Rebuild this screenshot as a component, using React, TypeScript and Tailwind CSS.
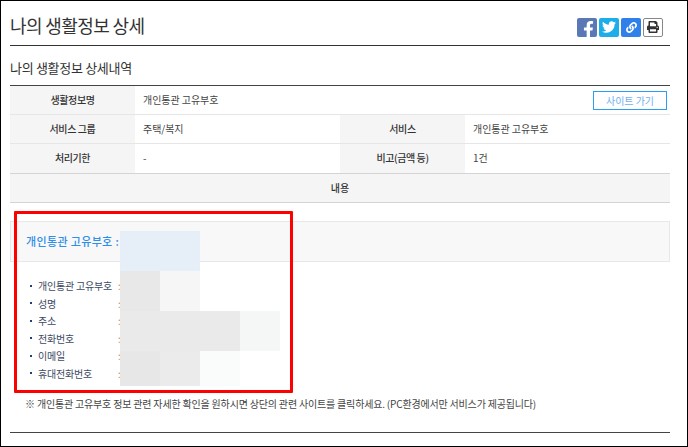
import React from "react";
import { FaFacebookF, FaTwitter, FaLink, FaPrint } from "react-icons/fa";

const font = { fontFamily: '"Noto Sans CJK KR", "Noto Sans", sans-serif' };

function Th({ children }: { children: React.ReactNode }) {
  return <div className="flex items-center justify-center pb-[2px] bg-[#f5f5f5] text-[10px] text-[#333] font-medium tracking-[-0.4px]">{children}</div>;
}
function Td({ children }: { children: React.ReactNode }) {
  return <div className="flex items-center pl-[8px] pb-[2px] text-[10px] text-[#444] tracking-[-0.05px]">{children}</div>;
}

const rows = ["개인통관 고유부호", "성명", "주소", "전화번호", "이메일", "휴대전화번호"];

const blocks = [
  "bg-[#e6eef8] w-[80px] h-[40px] left-[120px] top-[231px]",
  "bg-[#e8e8e8] w-[40px] h-[40px] left-[120px] top-[271px]",
  "bg-[#f6f6f6] w-[40px] h-[40px] left-[160px] top-[271px]",
  "bg-[#eaeaea] w-[120px] h-[40px] left-[120px] top-[311px]",
  "bg-[#f5f7f7] w-[40px] h-[40px] left-[240px] top-[311px]",
  "bg-[#e7e7e7] w-[40px] h-[35px] left-[120px] top-[351px]",
  "bg-[#ebebeb] w-[40px] h-[35px] left-[160px] top-[351px]",
  "bg-[#fafcfb] w-[40px] h-[35px] left-[200px] top-[351px]",
];

export default function App() {
  return (
    <div style={font} className="relative w-[688px] h-[447px] border border-black bg-white overflow-hidden">
      <div className="ml-[9px] w-[660px]">
        <div className="flex items-center justify-between h-[44px] border-b border-[#333] box-content">
          <h1 className="text-[18px] leading-[24px] text-[#333] tracking-[-0.6px] mt-[4px]">나의 생활정보 상세</h1>
          <div className="flex gap-[2px] mt-[8px] mr-[7px]">
            <span className="w-[20px] h-[19px] rounded-[2px] bg-[#5a78b5] flex items-end justify-center text-white overflow-hidden"><FaFacebookF className="w-[15px] h-[17px] -mb-[1px] ml-[3px]" /></span>
            <span className="w-[20px] h-[19px] rounded-[2px] bg-[#1daeea] flex items-center justify-center text-white"><FaTwitter className="w-[14px] h-[14px]" /></span>
            <span className="w-[20px] h-[19px] rounded-[2px] bg-[#2f80e8] flex items-center justify-center text-white"><FaLink className="w-[11px] h-[11px]" /></span>
            <span className="w-[20px] h-[19px] rounded-[2px] bg-white border border-[#888] flex items-center justify-center text-[#333]"><FaPrint className="w-[12px] h-[12px]" /></span>
          </div>
        </div>
        <h2 className="h-[39px] flex items-center text-[13px] text-[#333] tracking-[-0.3px] pt-[5px]">나의 생활정보 상세내역</h2>
        <div className="border-t border-[#444]">
          <div className="grid grid-cols-[125px_535px] h-[29px] border-b border-[#e6e6e6]">
            <Th>생활정보명</Th>
            <div className="flex items-center justify-between pl-[8px] pr-[3px] text-[10px] text-[#444] tracking-[-0.05px]">
              <span className="-mt-[2px]">개인통관 고유부호</span>
              <button className="w-[74px] h-[19px] border border-[#2a9df4] text-[#6fb0ee] text-[10px] flex items-center justify-center">사이트 가기</button>
            </div>
          </div>
          <div className="grid grid-cols-[125px_205px_125px_205px] h-[29px] border-b border-[#e6e6e6]">
            <Th>서비스 그룹</Th><Td>주택/복지</Td><Th>서비스</Th><Td>개인통관 고유부호</Td>
          </div>
          <div className="grid grid-cols-[125px_205px_125px_205px] h-[30px] border-b border-[#d4d4d4]">
            <Th>처리기한</Th><Td>-</Td><Th>비고(금액 등)</Th><Td>1건</Td>
          </div>
          <div className="h-[29px] flex items-center justify-center pb-[2px] bg-[#f5f5f5] border-b border-[#d4d4d4] text-[10px] text-[#333] font-medium">내용</div>
        </div>
        <div className="mt-[18px] h-[41px] border border-[#e8e8e8] bg-[#f8f8f8] flex items-center pl-[15px] text-[11px] text-[#2f8fe8] font-medium tracking-[0.35px]">
          개인통관 고유부호 :
        </div>
        <ul className="mt-[15px] ml-[20px] text-[10px] text-[#334] tracking-[-0.2px]">
          {rows.map((r) => (
            <li key={r} className="flex items-center h-[17.5px]">
              <span className="w-[2px] h-[2px] bg-[#1f3f7f] mr-[6px]" />
              <span className="w-[80px] text-[#3c4a63]">{r}</span>
              <span className="text-[#c8914f]">:</span>
            </li>
          ))}
        </ul>
        <p className="mt-[15px] ml-[15px] text-[10px] leading-[14px] text-[#444] tracking-[-0.18px] whitespace-nowrap">※ 개인통관 고유부호 정보 관련 자세한 확인을 원하시면 상단의 관련 사이트를 클릭하세요. (PC환경에서만 서비스가 제공됩니다)</p>
      </div>
      <div className="absolute left-[9px] top-[431px] w-[660px] h-px bg-[#444]" />
      <div className="absolute -left-px -top-px">
        {blocks.map((b, i) => (
          <div key={i} className={"absolute " + b} />
        ))}
        <div className="absolute left-[14px] top-[211px] w-[279px] h-[182px] border-[3px] border-[#ff0000] rounded-[1px]" />
      </div>
    </div>
  );
}
